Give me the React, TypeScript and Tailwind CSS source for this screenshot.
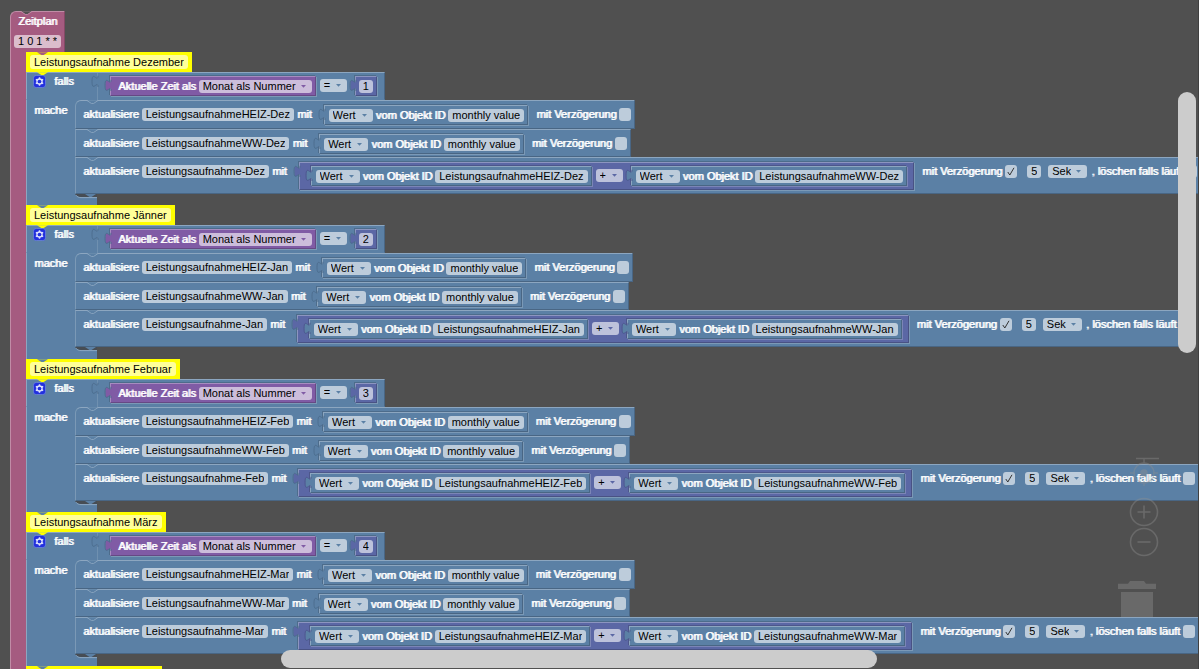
import type { ReactNode } from 'react';

type Tone = 'blue' | 'indigo' | 'purple' | 'rose';

const blockTone: Record<Tone, string> = {
  blue: 'bg-[#5b80a5] border-t-[#8ca6c0] border-l-[#8ca6c0] border-b-[#496684] border-r-[#496684]',
  indigo: 'bg-[#5b67a5] border-t-[#8c95c0] border-l-[#8c95c0] border-b-[#495284] border-r-[#495284]',
  purple: 'bg-[#805ba5] border-t-[#a68cc0] border-l-[#a68cc0] border-b-[#664984] border-r-[#664984]',
  rose: 'bg-[#a55b80] border-t-[#c08ca6] border-l-[#c08ca6] border-b-[#844966] border-r-[#844966]',
};

const slotShadow: Record<'blue' | 'indigo', string> = {
  blue: 'shadow-[1px_1px_0_#7b99b6,-1px_-1px_0_#4d6c8b]',
  indigo: 'shadow-[1px_1px_0_#7b85b6,-1px_-1px_0_#4d578b]',
};

const fieldTone: Record<Tone, string> = {
  blue: 'bg-[#bdccdb]',
  indigo: 'bg-[#bdc2db]',
  purple: 'bg-[#ccbddb]',
  rose: 'bg-[#dbbdcc]',
};

const fillTone: Record<Tone, string> = {
  blue: 'fill-[#5b80a5]',
  indigo: 'fill-[#5b67a5]',
  purple: 'fill-[#805ba5]',
  rose: 'fill-[#a55b80]',
};

function Label({ children }: { children: ReactNode }) {
  return <span className="shrink-0 leading-[13px] text-white [text-shadow:1px_0_0_#ffffff]">{children}</span>;
}

function TextField({ value, label, tone = 'blue' }: { value: string; label: string; tone?: Tone }) {
  return (
    <input
      aria-label={label}
      defaultValue={value}
      className={`block h-[13px] shrink-0 rounded-[3px] px-1 leading-[13px] text-black outline-none field-sizing-content ${fieldTone[tone]}`}
    />
  );
}

function SelectField({ value, label, tone = 'blue' }: { value: string; label: string; tone?: Tone }) {
  return (
    <span className="relative block h-[13px] shrink-0">
      <select
        aria-label={label}
        className={`block h-[13px] appearance-none rounded-[3px] pl-1 pr-4 leading-[13px] text-black outline-none ${fieldTone[tone]}`}
      >
        <option>{value}</option>
      </select>
      <svg viewBox="0 0 5 3" className={`pointer-events-none absolute right-[6px] top-[5px] h-[3px] w-[5px] ${fillTone[tone]}`}>
        <path d="M0 0h5L2.5 2.8z" />
      </svg>
    </span>
  );
}

function Check({ label, checked = false }: { label: string; checked?: boolean }) {
  return (
    <span className="relative block h-[13px] w-3 shrink-0">
      <input
        type="checkbox"
        aria-label={label}
        defaultChecked={checked}
        className="block h-[13px] w-3 appearance-none rounded-[3px] bg-[#bdccdb]"
      />
      {checked && (
        <svg viewBox="0 0 12 13" className="pointer-events-none absolute inset-0 h-[13px] w-3">
          <path d="M2.8 7 4.8 10 9 2.8" fill="none" stroke="#333" strokeWidth="1" />
        </svg>
      )}
    </span>
  );
}

function Tab({ tone, outline }: { tone: Tone; outline: string }) {
  return (
    <svg viewBox="-1 0 10 20" className={`absolute -left-[7px] -top-px h-[15px] w-[8px] ${fillTone[tone]}`}>
      <path d="M8.5 5c0 10-8-8-8 7.5s8-2.5 8 7.5z" />
      <path d="M8 5c0 10-8-8-8 7.5s8-2.5 8 7.5" fill="none" stroke={outline} strokeWidth="1.2" />
    </svg>
  );
}

function ValueBlock({
  tone,
  parent = 'blue',
  className = '',
  children,
}: {
  tone: Tone;
  parent?: 'blue' | 'indigo';
  className?: string;
  children: ReactNode;
}) {
  return (
    <div className={`relative flex shrink-0 items-start border ${blockTone[tone]} ${slotShadow[parent]} ${className}`}>
      <Tab tone={tone} outline={parent === 'blue' ? '#4c6b8c' : '#4c568c'} />
      {children}
    </div>
  );
}

function Notch({ fill, stroke = 'none' }: { fill: string; stroke?: string }) {
  return (
    <svg viewBox="0 0 15 5" className="absolute left-[11px] top-0 h-1 w-[11px]">
      <path d="M0 0l6 4h3l6-4z" fill={fill} />
      <path d="M0 .5l6 4h3l6-4" fill="none" stroke={stroke} strokeWidth="1.2" />
    </svg>
  );
}

function ObjectValue({ id, parent = 'blue' }: { id: string; parent?: 'blue' | 'indigo' }) {
  return (
    <ValueBlock tone="blue" parent={parent} className="h-5 gap-[3px] pl-1 pr-[3px] pt-[3px]">
      <SelectField value="Wert" label="Attribut" />
      <Label>vom Objekt ID</Label>
      <TextField value={id} label="Objekt ID" />
    </ValueBlock>
  );
}

function StatementRow({ className, children }: { className: string; children: ReactNode }) {
  return (
    <div
      className={`relative flex w-max items-start border border-b-[#496684] border-l-[#7b99b6] border-r-[#496684] border-t-[#8ca6c0] bg-[#5b80a5] pl-[7px] pr-[3px] ${className}`}
    >
      <div className="absolute inset-x-0 -top-px h-0">
        <Notch fill="#5b80a5" stroke="#8ca6c0" />
      </div>
      {children}
    </div>
  );
}

function UpdateRow({ state, className, first = false }: { state: string; className: string; first?: boolean }) {
  return (
    <StatementRow className={`${className} ${first ? 'rounded-tl-md' : ''}`}>
      <div className="flex gap-[3px] pt-[7px]">
        <Label>aktualisiere</Label>
        <TextField value={state} label="Datenpunkt" />
        <Label>mit</Label>
      </div>
      <div className="pl-3 pr-2 pt-1">
        <ObjectValue id="monthly value" />
      </div>
      <div className="flex gap-[3px] pt-[7px]">
        <Label>mit Verzögerung</Label>
        <Check label="mit Verzögerung" />
      </div>
    </StatementRow>
  );
}

function SumRow({ month }: { month: string }) {
  return (
    <StatementRow className="h-[37px]">
      <div className="flex gap-[3px] pt-[7px]">
        <Label>aktualisiere</Label>
        <TextField value={`Leistungsaufnahme-${month}`} label="Datenpunkt" />
        <Label>mit</Label>
      </div>
      <div className="pl-3 pr-2 pt-1">
        <ValueBlock tone="indigo" className="h-7 pl-[11px] pr-[6px] pt-[3px]">
          <ObjectValue id={`LeistungsaufnahmeHEIZ-${month}`} parent="indigo" />
          <div className="pl-1 pr-2 pt-[3px]">
            <SelectField value="+" label="Rechenart" tone="indigo" />
          </div>
          <ObjectValue id={`LeistungsaufnahmeWW-${month}`} parent="indigo" />
        </ValueBlock>
      </div>
      <div className="flex gap-[3px] pt-[7px]">
        <Label>mit Verzögerung</Label>
        <Check label="mit Verzögerung" checked />
      </div>
      <div className="flex gap-[7px] pl-[10px] pr-1 pt-[7px]">
        <TextField value="5" label="Verzögerung" />
        <SelectField value="Sek" label="Einheit" />
      </div>
      <div className="flex gap-[3px] pt-[7px]">
        <Label>, löschen falls läuft</Label>
        <Check label="löschen falls läuft" />
      </div>
    </StatementRow>
  );
}

function Comment({ text, above }: { text: string; above: string }) {
  return (
    <div className="relative flex h-5 w-max bg-[#ffff00] px-1 pt-[3px]">
      <Notch fill={above} />
      <input
        aria-label="Kommentar"
        defaultValue={text}
        className="block h-[14px] rounded-[3px] bg-[#ffff99] px-1 leading-[14px] text-black outline-none field-sizing-content"
      />
    </div>
  );
}

function GearButton() {
  return (
    <button type="button" aria-label="Block konfigurieren" className="block h-[13px] w-[13px] shrink-0">
      <svg viewBox="0 0 16 16" className="block h-[13px] w-[13px]">
        <rect x=".5" y=".5" width="15" height="15" rx="3.5" fill="#2230de" stroke="#6f88d8" />
        <g fill="#dfe3ff">
          <circle cx="8" cy="8" r="3.9" />
          <path d="M7.1 2.8h1.8v10.4H7.1z" />
          <path d="M7.1 2.8h1.8v10.4H7.1z" transform="rotate(60 8 8)" />
          <path d="M7.1 2.8h1.8v10.4H7.1z" transform="rotate(120 8 8)" />
        </g>
        <circle cx="8" cy="8" r="2.3" fill="#2230de" />
      </svg>
    </button>
  );
}

function ConditionRow({ month }: { month: string }) {
  return (
    <div className="relative flex h-7 w-max items-start border-b border-l border-r border-t border-b-[#5b80a5] border-l-[#8ca6c0] border-r-[#496684] border-t-[#8ca6c0] bg-[#5b80a5]">
      <div className="absolute inset-x-0 -left-px -top-px h-0">
        <Notch fill="#ffff00" />
      </div>
      <div className="flex w-[70px] gap-2 pl-[6px] pt-[2px]">
        <GearButton />
        <Label>falls</Label>
      </div>
      <div className="relative flex h-7 items-start border-l border-[#6f90b0] pl-3 pr-[7px] pt-[3px]">
        <Tab tone="blue" outline="#4c6b8c" />
        <ValueBlock tone="purple" className="h-5 gap-[3px] pl-[7px] pr-[3px] pt-[3px]">
          <Label>Aktuelle Zeit als</Label>
          <SelectField value="Monat als Nummer" label="Zeitformat" tone="purple" />
        </ValueBlock>
        <div className="pl-1 pr-2 pt-[3px]">
          <SelectField value="=" label="Vergleich" />
        </div>
        <ValueBlock tone="indigo" className="h-5 px-[3px] pt-[3px]">
          <TextField value={month} label="Monat" tone="indigo" />
        </ValueBlock>
      </div>
    </div>
  );
}

function MonthSection({ title, number, code, above }: { title: string; number: string; code: string; above: string }) {
  return (
    <section className="group">
      <Comment text={`Leistungsaufnahme ${title}`} above={above} />
      <ConditionRow month={number} />
      <div className="flex">
        <div className="w-[49px] shrink-0 border-l border-[#8ca6c0] bg-[#5b80a5] pl-[7px] pt-[2px]">
          <Label>mache</Label>
        </div>
        <div className="bg-[linear-gradient(#5b80a5,#5b80a5)] bg-[length:16px_16px] bg-no-repeat">
          <UpdateRow state={`LeistungsaufnahmeHEIZ-${code}`} className="h-[29px]" first />
          <UpdateRow state={`LeistungsaufnahmeWW-${code}`} className="h-7" />
          <SumRow month={code} />
        </div>
      </div>
      <div className="relative flex h-[11px] w-[71px] justify-end border-l border-[#8ca6c0] bg-[#5b80a5] group-even:h-3">
        <svg viewBox="0 0 22 5" className="block h-[5px] w-[22px]">
          <path d="M0 0C1 2 3 3 6 3h16V0z" fill="#474d54" />
          <path d="M10 0l4.5 3h2L21 0z" fill="#5b80a5" />
          <path d="M1 1.2C2.5 3.2 4 3.6 6 3.6h16" fill="none" stroke="#8ca6c0" />
        </svg>
      </div>
    </section>
  );
}

const months = [
  { title: 'Dezember', number: '1', code: 'Dez' },
  { title: 'Jänner', number: '2', code: 'Jan' },
  { title: 'Februar', number: '3', code: 'Feb' },
  { title: 'März', number: '4', code: 'Mar' },
];

function ZoomControls() {
  return (
    <div className="absolute right-[39px] top-[457px] flex w-[30px] flex-col opacity-40">
      <button type="button" aria-label="Ansicht zentrieren" className="block">
        <svg viewBox="0 0 30 32" className="h-8 w-[30px]" fill="none" stroke="#909090" strokeWidth="1.4">
          <path d="M7 1.5h23M15 2v5M15 24v5M1 16h5M24 16h5" />
          <circle cx="15" cy="16" r="10" />
          <circle cx="15" cy="16" r="3" fill="#909090" />
        </svg>
      </button>
      <button type="button" aria-label="Vergrößern" className="mt-2 block">
        <svg viewBox="0 0 30 30" className="h-[30px] w-[30px]" fill="none" stroke="#909090" strokeWidth="1.6">
          <circle cx="15" cy="15" r="13.5" />
          <path d="M8.5 15h13M15 8.5v13" />
        </svg>
      </button>
      <button type="button" aria-label="Verkleinern" className="block">
        <svg viewBox="0 0 30 30" className="h-[30px] w-[30px]" fill="none" stroke="#909090" strokeWidth="1.6">
          <circle cx="15" cy="15" r="13.5" />
          <path d="M8.5 15h13" />
        </svg>
      </button>
    </div>
  );
}

function Trash() {
  return (
    <button type="button" aria-label="Papierkorb" className="absolute right-[42px] top-[581px] block">
      <svg viewBox="0 0 38 56" className="h-14 w-[38px]" fill="#696969">
        <path d="M0 2.7h10L12 0h14l2 2.7h10V8H0z" />
        <path d="M3 11h32v45H3z" />
      </svg>
    </button>
  );
}

export default function App() {
  return (
    <main className="relative h-screen overflow-hidden border-r border-[#404040] bg-[#505050] font-['Liberation_Sans',Arial,sans-serif] text-[11px] whitespace-nowrap">
      <Trash />
      <div className="relative flex w-max flex-col pl-[10px] pt-[11px]">
        <div className="relative h-[41px] w-[55px] rounded-tl-md border border-b-0 border-l-[#c08ca6] border-r-[#844966] border-t-[#c08ca6] bg-[#a55b80] px-[3px] pt-[3px]">
          <div className="absolute inset-x-0 -left-px -top-px h-0">
            <Notch fill="#505050" stroke="#c08ca6" />
          </div>
          <div className="pl-1 leading-[13px]">
            <Label>Zeitplan</Label>
          </div>
          <div className="pt-[7px]">
            <TextField value="1 0 1 * *" label="Zeitplan" tone="rose" />
          </div>
        </div>
        <div className="flex">
          <div className="w-4 shrink-0 border-l border-[#c08ca6] bg-[#a55b80]" />
          <div>
            {months.map((m, i) => (
              <MonthSection key={m.code} {...m} above={i === 0 ? '#a55b80' : '#5b80a5'} />
            ))}
            <Comment text="Leistungsaufnahme April" above="#5b80a5" />
          </div>
        </div>
      </div>
      <ZoomControls />
      <div
        role="scrollbar"
        aria-label="Vertikal scrollen"
        aria-orientation="vertical"
        aria-controls="root"
        aria-valuenow={35}
        className="absolute right-[2px] top-[92px] h-[261px] w-[18px] rounded-full bg-[#cccccc]"
      />
      <div
        role="scrollbar"
        aria-label="Horizontal scrollen"
        aria-orientation="horizontal"
        aria-controls="root"
        aria-valuenow={50}
        className="absolute bottom-px left-[281px] h-[18px] w-[596px] rounded-full bg-[#cccccc]"
      />
    </main>
  );
}
